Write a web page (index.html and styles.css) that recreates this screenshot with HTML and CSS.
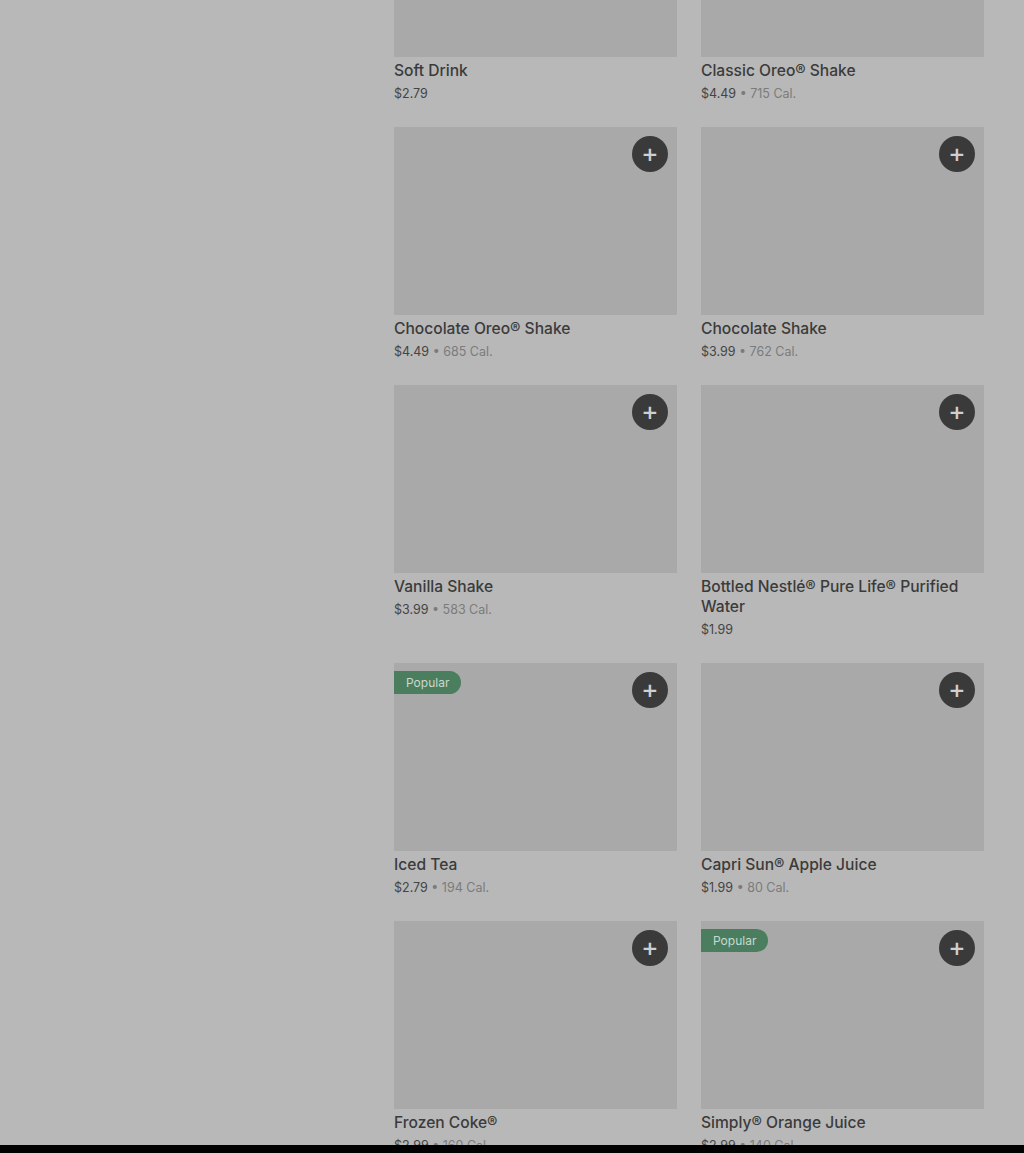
FILE: index.html
```html
<!DOCTYPE html>
<html lang="en">
<head>
    <meta charset="UTF-8">
    <meta name="viewport" content="width=device-width, initial-scale=1.0">
    <title>Menu - Drinks</title>
    <link rel="stylesheet" href="styles.css">
</head>
<body>
    <div class="page">
        <aside class="side"></aside>

        <main class="menu">
            <div class="item">
                <div class="photo"></div>
                <h3 class="name">Soft Drink</h3>
                <p class="meta">$2.79</p>
            </div>
            <div class="item">
                <div class="photo"></div>
                <h3 class="name">Classic Oreo® Shake</h3>
                <p class="meta">$4.49 <span class="cal">• 715 Cal.</span></p>
            </div>

            <div class="item">
                <div class="photo"><button class="add">+</button></div>
                <h3 class="name">Chocolate Oreo® Shake</h3>
                <p class="meta">$4.49 <span class="cal">• 685 Cal.</span></p>
            </div>
            <div class="item">
                <div class="photo"><button class="add">+</button></div>
                <h3 class="name">Chocolate Shake</h3>
                <p class="meta">$3.99 <span class="cal">• 762 Cal.</span></p>
            </div>

            <div class="item">
                <div class="photo"><button class="add">+</button></div>
                <h3 class="name">Vanilla Shake</h3>
                <p class="meta">$3.99 <span class="cal">• 583 Cal.</span></p>
            </div>
            <div class="item">
                <div class="photo"><button class="add">+</button></div>
                <h3 class="name">Bottled Nestlé® Pure Life® Purified Water</h3>
                <p class="meta">$1.99</p>
            </div>

            <div class="item">
                <div class="photo">
                    <span class="badge">Popular</span>
                    <button class="add">+</button>
                </div>
                <h3 class="name">Iced Tea</h3>
                <p class="meta">$2.79 <span class="cal">• 194 Cal.</span></p>
            </div>
            <div class="item">
                <div class="photo"><button class="add">+</button></div>
                <h3 class="name">Capri Sun® Apple Juice</h3>
                <p class="meta">$1.99 <span class="cal">• 80 Cal.</span></p>
            </div>

            <div class="item">
                <div class="photo"><button class="add">+</button></div>
                <h3 class="name">Frozen Coke®</h3>
                <p class="meta">$2.99 <span class="cal">• 160 Cal.</span></p>
            </div>
            <div class="item">
                <div class="photo">
                    <span class="badge">Popular</span>
                    <button class="add">+</button>
                </div>
                <h3 class="name">Simply® Orange Juice</h3>
                <p class="meta">$2.99 <span class="cal">• 140 Cal.</span></p>
            </div>
        </main>
    </div>
    <div class="bottom-bar"></div>
</body>
</html>
```

FILE: styles.css
```css
/* Página general con el overlay gris */
body {
    margin: 0;
    background: #000;
    font-family: 'Inter', 'Liberation Sans', sans-serif;
}

.page {
    display: flex;
    height: 1145px;
    overflow: hidden;
    background: #b8b8b8;
}

/* Columna lateral vacía */
.side {
    width: 394px;
    flex-shrink: 0;
}

/* Rejilla de productos */
.menu {
    display: grid;
    grid-template-columns: 283px 283px;
    column-gap: 24px;
    row-gap: 23px;
    margin-top: -131px;
    align-content: start;
}

.item {
    display: flex;
    flex-direction: column;
}

.photo {
    position: relative;
    height: 188px;
    background: #a9a9a9;
}

/* Botón de añadir */
.add {
    position: absolute;
    top: 9px;
    right: 9px;
    width: 36px;
    height: 36px;
    border: none;
    border-radius: 50%;
    background: #3a3a3a;
    color: #cfcfcf;
    font-family: 'DejaVu Sans', sans-serif;
    font-size: 20px;
    font-weight: bold;
    line-height: 36px;
    padding: 0;
    cursor: pointer;
}

/* Etiqueta "Popular" */
.badge {
    position: absolute;
    top: 8px;
    left: 0;
    height: 23px;
    padding: 0 12px;
    border-radius: 0 12px 12px 0;
    background: #4b7e5f;
    color: #c9d9cf;
    font-size: 12px;
    line-height: 23px;
}

.name {
    margin: 4px 0 0;
    font-size: 15.6px;
    font-weight: 500;
    line-height: 20px;
    color: #3b3b3b;
}

.meta {
    margin: 3px 0 0;
    font-size: 12.5px;
    line-height: 20px;
    color: #444;
}

.cal {
    color: #7b7b7b;
}

.bottom-bar {
    height: 8px;
    background: #000;
}
```
